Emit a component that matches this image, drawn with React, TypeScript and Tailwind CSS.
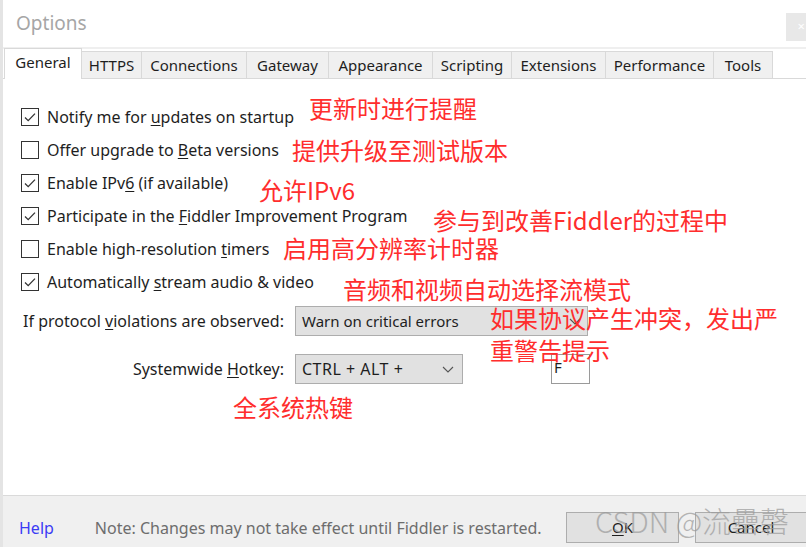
import React from "react";

const ui = { fontFamily: '"Noto Sans", "Open Sans", sans-serif' };
const cjk = { fontFamily: '"Noto Sans CJK SC", "Noto Sans", sans-serif' };

const tabs = [
  { name: "General", w: "w-[78px]" },
  { name: "HTTPS", w: "w-[61px]" },
  { name: "Connections", w: "w-[106px]" },
  { name: "Gateway", w: "w-[83px]" },
  { name: "Appearance", w: "w-[105px]" },
  { name: "Scripting", w: "w-[80px]" },
  { name: "Extensions", w: "w-[95px]" },
  { name: "Performance", w: "w-[109px]" },
  { name: "Tools", w: "w-[60px]" },
];

function Mn({ c }: { c: string }) {
  return <span className="underline underline-offset-2">{c}</span>;
}

function Check({ on }: { on: boolean }) {
  return (
    <span className="flex h-[18px] w-[18px] shrink-0 items-center justify-center border border-[#333] bg-white">
      {on && (
        <svg width="14" height="14" viewBox="0 0 14 14" fill="none">
          <polyline
            points="2,7.5 5.2,10.6 12,3.6"
            stroke="#333"
            strokeWidth="1.3"
          />
        </svg>
      )}
    </span>
  );
}

function Chevron() {
  return (
    <svg width="12" height="7" viewBox="0 0 12 7" fill="none">
      <polyline points="1,1 6,6 11,1" stroke="#555" strokeWidth="1.1" />
    </svg>
  );
}

const rows: { on: boolean; label: React.ReactNode }[] = [
  {
    on: true,
    label: (
      <>
        Notify me for <Mn c="u" />
        pdates on startup
      </>
    ),
  },
  {
    on: false,
    label: (
      <>
        Offer upgrade to <Mn c="B" />
        eta versions
      </>
    ),
  },
  {
    on: true,
    label: (
      <>
        Enable IPv<Mn c="6" /> (if available)
      </>
    ),
  },
  {
    on: true,
    label: (
      <>
        Participate in the <Mn c="F" />
        iddler Improvement Program
      </>
    ),
  },
  {
    on: false,
    label: (
      <>
        Enable high-resolution <Mn c="t" />
        imers
      </>
    ),
  },
  {
    on: true,
    label: (
      <>
        Automatically <Mn c="s" />
        tream audio &amp; video
      </>
    ),
  },
];

const notes = [
  { t: "更新时进行提醒", c: "left-[306px] top-[92px]" },
  { t: "提供升级至测试版本", c: "left-[289px] top-[134px]" },
  { t: "允许IPv6", c: "left-[256px] top-[174px]" },
  { t: "参与到改善Fiddler的过程中", c: "left-[430px] top-[204px]" },
  { t: "启用高分辨率计时器", c: "left-[280px] top-[232px]" },
  { t: "音频和视频自动选择流模式", c: "left-[340px] top-[273px]" },
  { t: "如果协议产生冲突，发出严", c: "left-[487px] top-[302px]" },
  { t: "重警告提示", c: "left-[487px] top-[334px]" },
  { t: "全系统热键", c: "left-[230px] top-[391px]" },
];

export default function App() {
  return (
    <div
      className="relative flex h-[547px] w-[806px] flex-col overflow-hidden border-l-[3px] border-[#e4e4e4] bg-white text-[16px] text-[#1e1e1e]"
      style={ui}
    >
      {/* title bar */}
      <div className="flex h-[49px] shrink-0 items-center border-b-2 border-[#efefef] pl-[13px]">
        <span className="text-[19px] text-[#a6a6a6]">Options</span>
      </div>
      <div className="absolute right-0 top-[13px] flex h-[28px] w-[20px] items-center justify-end bg-[#e8e8e8] pr-[1px] text-[13px] text-white">
        ×
      </div>

      {/* tabs */}
      <div className="flex h-[30px] shrink-0 items-end border-b border-[#d9d9d9] pl-[1px] text-[15px]">
        {tabs.map((t, i) =>
          i === 0 ? (
            <div
              key={t.name}
              className={`${t.w} -mb-px flex h-[31px] items-center justify-center border border-b-0 border-[#d9d9d9] bg-white pb-[3px]`}
            >
              {t.name}
            </div>
          ) : (
            <div
              key={t.name}
              className={`${t.w} -ml-px flex h-[27px] items-center justify-center border border-b-0 border-[#d9d9d9] bg-[#f0f0f0]`}
            >
              {t.name}
            </div>
          )
        )}
      </div>

      {/* general page */}
      <div className="flex flex-1 flex-col pl-[18px] pt-[21px]">
        {rows.map((r, i) => (
          <div key={i} className="flex h-[33px] items-center gap-[8px]">
            <Check on={r.on} />
            <span>{r.label}</span>
          </div>
        ))}

        <div className="mt-[8px] flex h-[30px] items-center">
          <span className="w-[263px] text-right">
            If protocol <Mn c="v" />
            iolations are observed:
          </span>
          <div className="ml-[11px] flex h-[30px] w-[293px] items-center justify-between border border-[#adadad] bg-[#e1e1e1] pl-[6px] pr-[6px] text-[15px]">
            <span>Warn on critical errors</span>
            <Chevron />
          </div>
        </div>

        <div className="mt-[18px] flex h-[30px] items-center">
          <span className="w-[263px] text-right">
            Systemwide <Mn c="H" />
            otkey:
          </span>
          <div className="ml-[11px] flex h-[30px] w-[168px] items-center justify-between border border-[#adadad] bg-[#e1e1e1] pl-[6px] pr-[8px]">
            <span className="tracking-[0.5px]">CTRL + ALT +</span>
            <Chevron />
          </div>
          <div className="ml-[88px] flex h-[30px] w-[39px] items-start border border-[#9a9a9a] bg-white pl-[2px] pt-[2px] text-[15px] leading-[20px]">
            F
          </div>
        </div>
      </div>

      {/* footer */}
      <div className="flex h-[52px] shrink-0 items-center whitespace-nowrap border-t border-[#dadada] bg-[#f0f0f0] pl-[16px] pt-[13px]">
        <span className="text-[#3b3bf5]">Help</span>
        <span className="ml-[41px] text-[#6d6d6d]">
          Note: Changes may not take effect until Fiddler is restarted.
        </span>
        <div className="absolute left-[563px] top-[512px] flex h-[31px] w-[113px] items-center justify-center border border-[#adadad] bg-[#e1e1e1] text-[15px]">
          <Mn c="O" />K
        </div>
        <div className="absolute left-[692px] top-[512px] flex h-[31px] w-[120px] items-center justify-center border border-[#adadad] bg-[#e1e1e1] pr-[8px] text-[15px]">
          Cancel
        </div>
      </div>

      {/* annotations */}
      {notes.map((n) => (
        <span
          key={n.t}
          className={`absolute ${n.c} whitespace-nowrap text-[24px] leading-[32px] text-[#ff2d2d]`}
          style={cjk}
        >
          {n.t}
        </span>
      ))}

      {/* watermark */}
      <span
        className="pointer-events-none absolute left-[592px] top-[501px] whitespace-nowrap text-[29px] font-light leading-[38px] text-[#9a9a9a] opacity-70"
        style={cjk}
      >
        CSDN @流罍磬
      </span>
    </div>
  );
}
